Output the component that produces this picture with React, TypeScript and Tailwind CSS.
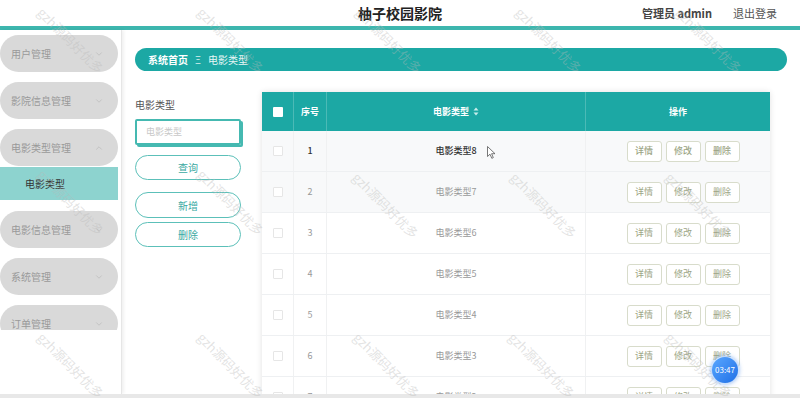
import { ChevronDown, ChevronUp } from 'lucide-react'

const FONT = { fontFamily: '"Noto Sans CJK SC", "Noto Sans", sans-serif' }

const menus = [
  { label: '用户管理' },
  { label: '影院信息管理' },
  { label: '电影类型管理', open: true, children: ['电影类型'] },
  { label: '电影信息管理' },
  { label: '系统管理' },
  { label: '订单管理' },
]

const rows = [8, 7, 6, 5, 4, 3, 2].map((n, i) => ({ id: i + 1, name: `电影类型${n}` }))

const marks = [
  [47, 3], [207, 3], [365, 3], [525, 3], [685, 3],
  [47, 165], [207, 165], [362, 168], [520, 168], [675, 168],
  [47, 328], [207, 328], [363, 328], [518, 328], [675, 328],
]

function SortIcon() {
  return (
    <svg width="6" height="9" viewBox="0 0 6 9" className="inline-block ml-1">
      <path d="M3 0.5L5.5 3.5H0.5Z" fill="#c8ecea" />
      <path d="M3 8.5L5.5 5.5H0.5Z" fill="#c8ecea" />
    </svg>
  )
}

function Cursor() {
  return (
    <svg width="9" height="13" viewBox="0 0 9 13" className="absolute left-[487px] top-[146px]">
      <path d="M0.5 0.5V10.5L3 8.2L4.8 12.3L6.3 11.6L4.6 7.7H8Z" fill="#fff" stroke="#555" strokeWidth="0.8" strokeLinejoin="round" />
    </svg>
  )
}

function Sidebar() {
  return (
    <div className="w-[122px] shrink-0 border-r border-[#e6e6e6] shadow-[2px_0_3px_rgba(0,0,0,0.06)]">
      <div className="h-[300px] overflow-hidden pt-[5px] w-[118px]">
        {menus.map((m) => (
          <div key={m.label} className={m.children ? 'mb-[11px]' : 'mb-[10px]'}>
            <div className="h-[37px] rounded-full bg-[#d9d9d9] flex items-center justify-between pl-[11px] pr-[14px]">
              <span className="text-[10px] text-[#999]">{m.label}</span>
              {m.open ? (
                <ChevronUp size={10} color="#b5b5b5" strokeWidth={1.5} />
              ) : (
                <ChevronDown size={10} color="#b5b5b5" strokeWidth={1.5} />
              )}
            </div>
            {m.children &&
              m.children.map((c) => (
                <div key={c} className="mt-px h-[33px] bg-[#8dd3cf] flex items-center pl-[25px] text-[10px] text-[#333]">
                  {c}
                </div>
              ))}
          </div>
        ))}
      </div>
    </div>
  )
}

function SearchPanel() {
  return (
    <div className="w-[108px] shrink-0 pt-[6px]">
      <div className="text-[10px] text-[#555] leading-[14px]">电影类型</div>
      <div className="mt-[7px] h-[26px] w-[106px] border-2 border-[#45b9b1] rounded-[2px] shadow-[2px_2px_0_#45b9b1] flex items-center pl-[9px] text-[9px] text-[#c8c8c8]">
        电影类型
      </div>
      <button className="mt-[10px] w-[106px] h-[25px] rounded-full border border-[#5cc0b9] text-[10px] text-[#3aa9a2] flex items-center justify-center">
        查询
      </button>
      <button className="mt-[12px] w-[106px] h-[26px] rounded-full border border-[#5cc0b9] text-[10px] text-[#3aa9a2] flex items-center justify-center">
        新增
      </button>
      <button className="mt-[4px] w-[106px] h-[25px] rounded-full border border-[#5cc0b9] text-[10px] text-[#3aa9a2] flex items-center justify-center">
        删除
      </button>
    </div>
  )
}

function ActionButton({ label }: { label: string }) {
  return (
    <button className="h-[21px] w-[35px] rounded-[3px] border border-[#d8dccb] bg-white text-[9px] text-[#9ca585] flex items-center justify-center">
      {label}
    </button>
  )
}

function TypeTable() {
  return (
    <div className="w-[508px] shadow-[0_0_6px_rgba(0,0,0,0.12)] bg-white">
      <div className="grid grid-cols-[32px_33px_259px_184px] h-[39px] bg-[#1ca8a4] text-white text-[9px] font-bold">
        <div className="flex items-center justify-center border-r border-[#4bbab6]">
          <span className="w-[10px] h-[10px] bg-white rounded-[1px]" />
        </div>
        <div className="flex items-center justify-center border-r border-[#4bbab6]">序号</div>
        <div className="flex items-center justify-center border-r border-[#4bbab6]">
          电影类型
          <SortIcon />
        </div>
        <div className="flex items-center justify-center">操作</div>
      </div>
      {rows.map((r) => (
        <div
          key={r.id}
          className={`grid grid-cols-[32px_33px_259px_184px] h-[41px] border-b border-[#eef0f2] text-[9px] ${
            r.id <= 2 ? 'bg-[#f8f9fa]' : 'bg-white'
          } ${r.id === 1 ? 'text-[#333] font-medium' : 'text-[#999]'}`}
        >
          <div className="flex items-center justify-center border-r border-[#f0f1f2]">
            <span className="w-[10px] h-[10px] bg-white border border-[#e6e6e6] rounded-[1px]" />
          </div>
          <div className="flex items-center justify-center border-r border-[#f0f1f2]">{r.id}</div>
          <div className="flex items-center justify-center border-r border-[#f0f1f2]">{r.name}</div>
          <div className="flex items-center justify-center gap-[4px] pl-[10px]">
            <ActionButton label="详情" />
            <ActionButton label="修改" />
            <ActionButton label="删除" />
          </div>
        </div>
      ))}
    </div>
  )
}

export default function App() {
  return (
    <div className="relative w-[800px] h-[398px] overflow-hidden bg-white flex flex-col" style={FONT}>
      <header className="h-[26px] shrink-0 grid grid-cols-[1fr_auto_1fr] items-center">
        <div />
        <h1 className="text-[14px] font-bold text-[#222]">柚子校园影院</h1>
        <div className="flex justify-end items-center gap-[21px] pr-[23px] text-[11px]">
          <span className="font-bold text-[#444]">管理员 admin</span>
          <span className="text-[#555]">退出登录</span>
        </div>
      </header>
      <div className="h-[4px] shrink-0 bg-[#3db6ae]" />

      <div className="flex flex-1 min-h-0">
        <Sidebar />
        <main className="flex-1 min-w-0 pl-[13px] pt-[18px]">
          <div className="w-[652px] h-[23px] rounded-full bg-[#1ca8a4] flex items-center pl-[13px] text-[10px] text-white">
            <span className="font-bold">系统首页</span>
            <span className="mx-[7px] text-[#d6f0ee]">Ξ</span>
            <span className="text-[#e8f7f6]">电影类型</span>
          </div>
          <div className="flex gap-[19px] mt-[21px]">
            <SearchPanel />
            <TypeTable />
          </div>
        </main>
      </div>
      <div className="h-[4px] shrink-0 bg-[#e8e8e8]" />

      <Cursor />

      {marks.map(([x, y], i) => (
        <span
          key={i}
          className="absolute origin-top-left rotate-45 text-[13px] whitespace-nowrap pointer-events-none text-[rgba(185,185,185,0.4)]"
          style={{ left: x, top: y }}
        >
          gzh源码好优多
        </span>
      ))}

      <div className="absolute left-[711px] top-[356px] w-[28px] h-[28px] rounded-full bg-gradient-to-br from-[#5aa7ff] to-[#1d6fe6] border border-white/70 shadow-[0_0_4px_rgba(30,110,230,0.5)] flex items-center justify-center text-[8px] text-white">
        03:47
      </div>
    </div>
  )
}
